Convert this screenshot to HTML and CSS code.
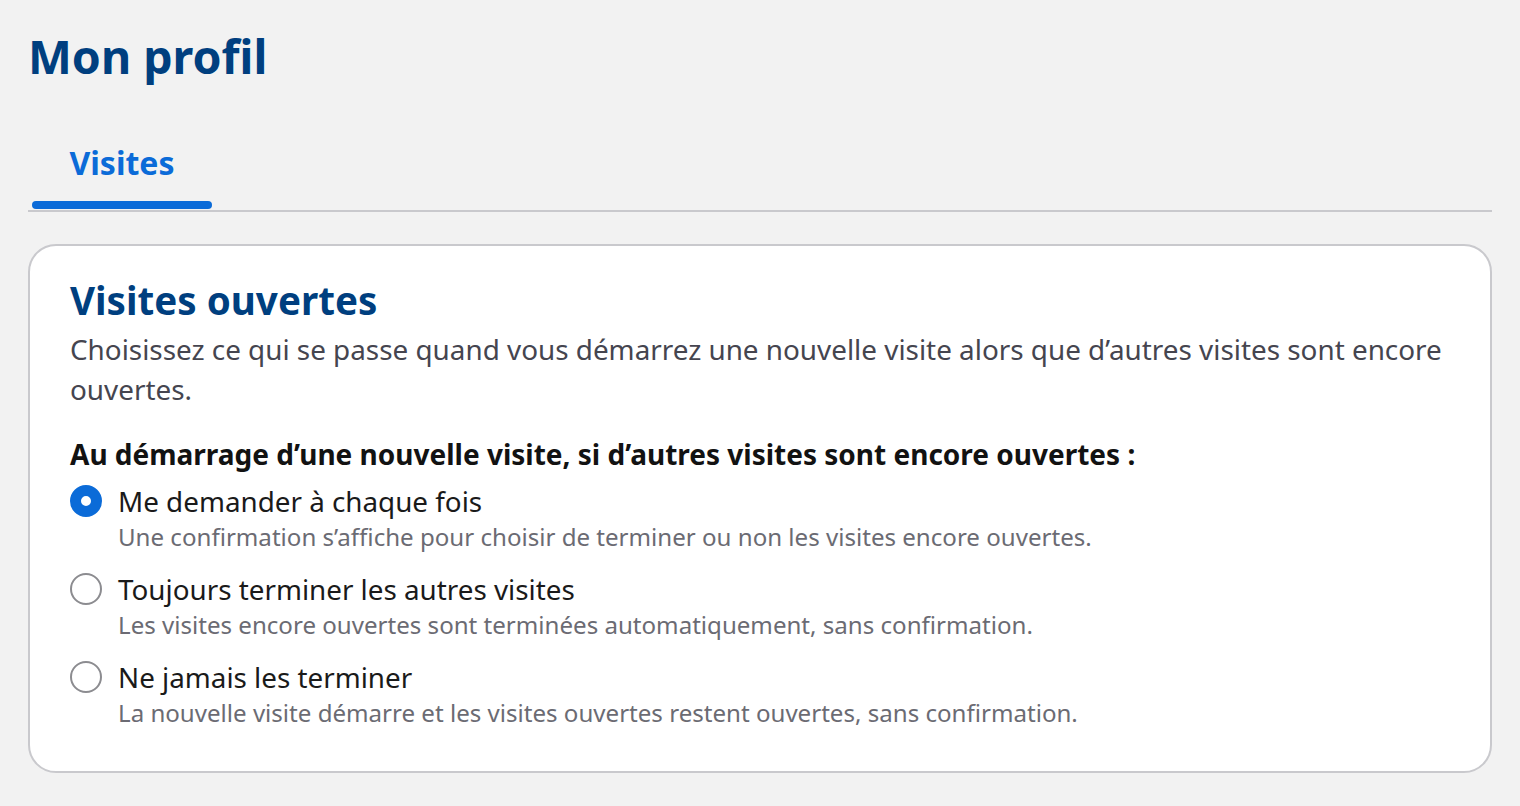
FILE: index.html
```html
<!DOCTYPE html>
<html lang="fr">
	<head>
		<meta charset="UTF-8" />
		<meta name="viewport" content="width=device-width, initial-scale=1.0" />
		<title>Mon profil</title>
		<link rel="stylesheet" href="styles.css">
	</head>
	<body>
		<main class="page">
			<h1 class="page-title">Mon profil</h1>
			<nav class="tabs">
				<a class="tab tab-active" href="#">Visites</a>
			</nav>
			<section class="card">
				<h2 class="card-title">Visites ouvertes</h2>
				<p class="card-desc">
					Choisissez ce qui se passe quand vous démarrez une nouvelle visite alors que d’autres visites sont encore ouvertes.
				</p>
				<fieldset class="choices">
					<legend class="choices-label">Au démarrage d’une nouvelle visite, si d’autres visites sont encore ouvertes :</legend>
					<label class="choice">
						<input type="radio" name="open-visits" value="ask" checked />
						<span class="choice-text">
							<span class="choice-title">Me demander à chaque fois</span>
							<span class="choice-hint">Une confirmation s’affiche pour choisir de terminer ou non les visites encore ouvertes.</span>
						</span>
					</label>
					<label class="choice">
						<input type="radio" name="open-visits" value="close" />
						<span class="choice-text">
							<span class="choice-title">Toujours terminer les autres visites</span>
							<span class="choice-hint">Les visites encore ouvertes sont terminées automatiquement, sans confirmation.</span>
						</span>
					</label>
					<label class="choice">
						<input type="radio" name="open-visits" value="keep" />
						<span class="choice-text">
							<span class="choice-title">Ne jamais les terminer</span>
							<span class="choice-hint">La nouvelle visite démarre et les visites ouvertes restent ouvertes, sans confirmation.</span>
						</span>
					</label>
				</fieldset>
			</section>
		</main>
	</body>
</html>
```

FILE: styles.css
```css
* {
	box-sizing: border-box;
}
body {
	margin: 0;
	background: #f2f2f2;
	font-family: 'Noto Sans', 'Open Sans', sans-serif;
	color: #1a1a1a;
}
.page {
	display: flex;
	flex-direction: column;
	padding: 18px 28px 34px;
}
.page-title {
	margin: 0;
	font-size: 46.5px;
	line-height: 76px;
	font-weight: 700;
	color: #003f7f;
}
/* barre d'onglets */
.tabs {
	display: flex;
	margin-top: 49px;
	padding-left: 4px;
	border-bottom: 2px solid #c9c9cd;
}
.tab {
	position: relative;
	width: 180px;
	padding-bottom: 27px;
	text-align: center;
	font-size: 32px;
	line-height: 40px;
	font-weight: 700;
	color: #0b6bd8;
	text-decoration: none;
}
.tab-active::after {
	content: '';
	position: absolute;
	left: 0;
	right: 0;
	bottom: 1px;
	height: 8px;
	border-radius: 4px;
	background: #0b6bd8;
}
/* carte */
.card {
	margin-top: 32px;
	padding: 30px 40px 40px;
	background: #fff;
	border: 2px solid #c9c9cd;
	border-radius: 28px;
}
.card-title {
	margin: 0;
	font-size: 38.6px;
	line-height: 48px;
	font-weight: 700;
	color: #003f7f;
}
.card-desc {
	margin: 5px 0 0;
	font-size: 27.85px;
	line-height: 40px;
	color: #45454f;
}
.choices {
	margin: 27px 0 0;
	padding: 0;
	border: 0;
	display: flex;
	flex-direction: column;
	gap: 16px;
}
.choices-label {
	padding: 0;
	margin-bottom: 11px;
	font-size: 28px;
	line-height: 36px;
	font-weight: 700;
	color: #121212;
}
.choice {
	display: flex;
	align-items: flex-start;
	gap: 16px;
	cursor: pointer;
}
.choice input {
	appearance: none;
	flex: none;
	width: 32px;
	height: 32px;
	margin: 2px 0 0;
	border: 2px solid #8c8c90;
	border-radius: 50%;
	background: #fff;
}
.choice input:checked {
	border: 11px solid #0b6bd8;
}
.choice-text {
	display: flex;
	flex-direction: column;
}
.choice-title {
	font-size: 27.8px;
	line-height: 36px;
	color: #1a1a1a;
}
.choice-hint {
	font-size: 24.1px;
	line-height: 36px;
	color: #6b6b73;
}
```
